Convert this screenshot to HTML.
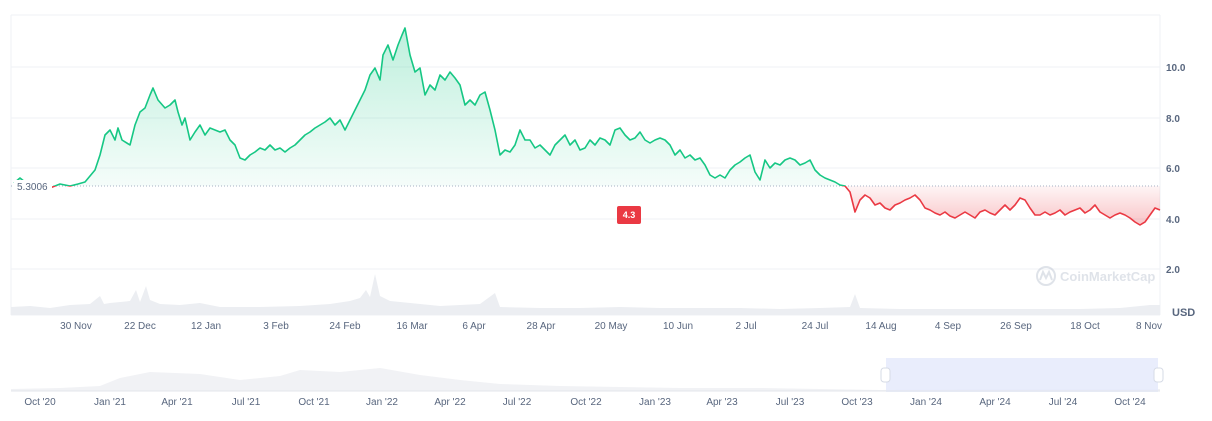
<!DOCTYPE html>
<html><head><meta charset="utf-8"><style>
body{margin:0;background:#fff;width:1212px;height:416px;overflow:hidden;font-family:"Liberation Sans",sans-serif}
svg text{font-family:"Liberation Sans",sans-serif;font-size:10px;fill:#58667e}
</style></head><body>
<svg width="1212" height="416" viewBox="0 0 1212 416">
<defs>
<linearGradient id="gg" x1="0" y1="0" x2="0" y2="1"><stop offset="0" stop-color="#16c784" stop-opacity="0.28"/><stop offset="1" stop-color="#16c784" stop-opacity="0.04"/></linearGradient>
<linearGradient id="rg" x1="0" y1="0" x2="0" y2="1"><stop offset="0" stop-color="#ea3943" stop-opacity="0.05"/><stop offset="1" stop-color="#ea3943" stop-opacity="0.3"/></linearGradient>
<clipPath id="up"><rect x="0" y="0" width="1212" height="186"/></clipPath>
<clipPath id="dn"><rect x="0" y="186" width="1212" height="200"/></clipPath>
</defs>
<g stroke="#eff2f5" stroke-width="1">
<line x1="11" y1="15" x2="1160" y2="15"/><line x1="11" y1="67" x2="1160" y2="67"/><line x1="11" y1="118" x2="1160" y2="118"/><line x1="11" y1="168" x2="1160" y2="168"/><line x1="11" y1="219" x2="1160" y2="219"/><line x1="11" y1="269" x2="1160" y2="269"/>
<line x1="11" y1="15" x2="11" y2="315"/><line x1="1160" y1="15" x2="1160" y2="315"/><line x1="11" y1="315" x2="1160" y2="315"/>
</g>
<g id="fills">
<path clip-path="url(#up)" fill="url(#gg)" d="M14,186 L14,183 20,178 30,186 40,185 50,188 60,184 70,186 78,184 85,182 95,170 100,155 105,135 110,130 115,140 118,128 122,140 130,145 135,125 140,112 145,108 150,95 153,88 158,100 165,108 170,105 175,100 178,112 182,125 185,118 190,140 195,132 200,125 205,135 210,128 215,130 220,132 225,130 230,140 235,145 240,158 245,160 250,155 255,152 260,148 265,150 270,145 275,150 280,148 285,152 290,148 295,145 300,140 305,135 310,132 315,128 320,125 325,122 330,118 335,125 340,120 345,130 350,120 355,110 360,100 365,90 370,75 375,68 380,80 383,55 388,45 393,60 398,45 402,35 405,28 410,55 415,72 420,68 425,95 430,85 435,90 440,75 445,80 450,72 455,78 460,85 465,105 470,100 475,105 480,95 485,92 490,110 495,130 500,155 505,150 510,152 515,145 520,130 525,140 530,140 535,148 540,145 545,150 550,155 555,145 560,140 565,135 570,145 575,140 580,150 585,148 590,140 595,145 600,138 605,140 610,145 615,130 620,128 625,135 630,140 635,138 640,132 645,140 650,143 655,140 660,138 665,140 670,145 675,155 680,150 685,158 690,155 695,160 700,158 705,165 710,175 715,178 720,175 725,178 730,170 735,165 740,162 745,158 750,155 755,172 760,180 765,160 770,168 775,163 780,165 785,160 790,158 795,160 800,165 805,163 810,160 815,170 820,175 825,178 830,180 835,182 840,185 845,186 L845,186 Z"/>
<path clip-path="url(#dn)" fill="url(#rg)" d="M845,186 L850,192 855,212 860,200 865,195 870,198 875,205 880,203 885,208 890,210 895,205 900,203 905,200 910,198 915,195 920,200 925,208 930,210 935,213 940,215 945,212 950,216 955,218 960,215 965,212 970,215 975,218 980,212 985,210 990,213 995,215 1000,210 1005,205 1010,210 1015,205 1020,198 1025,200 1030,208 1035,215 1040,215 1045,212 1050,215 1055,213 1060,210 1065,215 1070,212 1075,210 1080,208 1085,213 1090,210 1095,205 1100,212 1105,215 1110,218 1115,215 1120,213 1125,215 1130,218 1135,222 1140,225 1145,222 1150,215 1155,208 1160,210 L1160,186 Z"/>
</g>
<line x1="11" y1="186" x2="1160" y2="186" stroke="#a6b0c3" stroke-width="1" stroke-dasharray="1,2"/>
<path id="ln" fill="none" stroke-width="1.6" stroke-linejoin="round" d="M14,183 20,178 30,186 40,185 50,188 60,184 70,186 78,184 85,182 95,170 100,155 105,135 110,130 115,140 118,128 122,140 130,145 135,125 140,112 145,108 150,95 153,88 158,100 165,108 170,105 175,100 178,112 182,125 185,118 190,140 195,132 200,125 205,135 210,128 215,130 220,132 225,130 230,140 235,145 240,158 245,160 250,155 255,152 260,148 265,150 270,145 275,150 280,148 285,152 290,148 295,145 300,140 305,135 310,132 315,128 320,125 325,122 330,118 335,125 340,120 345,130 350,120 355,110 360,100 365,90 370,75 375,68 380,80 383,55 388,45 393,60 398,45 402,35 405,28 410,55 415,72 420,68 425,95 430,85 435,90 440,75 445,80 450,72 455,78 460,85 465,105 470,100 475,105 480,95 485,92 490,110 495,130 500,155 505,150 510,152 515,145 520,130 525,140 530,140 535,148 540,145 545,150 550,155 555,145 560,140 565,135 570,145 575,140 580,150 585,148 590,140 595,145 600,138 605,140 610,145 615,130 620,128 625,135 630,140 635,138 640,132 645,140 650,143 655,140 660,138 665,140 670,145 675,155 680,150 685,158 690,155 695,160 700,158 705,165 710,175 715,178 720,175 725,178 730,170 735,165 740,162 745,158 750,155 755,172 760,180 765,160 770,168 775,163 780,165 785,160 790,158 795,160 800,165 805,163 810,160 815,170 820,175 825,178 830,180 835,182 840,185 845,186 850,192 855,212 860,200 865,195 870,198 875,205 880,203 885,208 890,210 895,205 900,203 905,200 910,198 915,195 920,200 925,208 930,210 935,213 940,215 945,212 950,216 955,218 960,215 965,212 970,215 975,218 980,212 985,210 990,213 995,215 1000,210 1005,205 1010,210 1015,205 1020,198 1025,200 1030,208 1035,215 1040,215 1045,212 1050,215 1055,213 1060,210 1065,215 1070,212 1075,210 1080,208 1085,213 1090,210 1095,205 1100,212 1105,215 1110,218 1115,215 1120,213 1125,215 1130,218 1135,222 1140,225 1145,222 1150,215 1155,208 1160,210"/>
<use href="#ln" stroke="#16c784" clip-path="url(#up)"/>
<use href="#ln" stroke="#ea3943" clip-path="url(#dn)"/>
<!-- volume -->
<path fill="#eceef2" d="M11,315 L11,307 30,306 50,308 70,305 90,304 100,296 104,304 110,303 130,301 136,290 140,302 146,286 150,300 160,304 180,305 200,303 220,307 260,307 300,306 330,304 350,301 360,298 366,290 370,297 375,274 380,296 390,301 410,303 440,306 480,304 495,293 500,307 540,308 580,308 620,307 660,308 700,308 740,308 780,309 820,308 850,307 855,294 860,308 900,309 950,309 1000,309 1040,309 1080,309 1120,308 1150,305 1160,305 L1160,315 Z"/>
<g font-weight="bold">
<text x="1166" y="71">10.0</text><text x="1166" y="122">8.0</text><text x="1166" y="172">6.0</text><text x="1166" y="223">4.0</text><text x="1166" y="273">2.0</text>
<text x="1172" y="316" style="font-size:11px">USD</text>
</g>
<rect x="14" y="180" width="38" height="12" fill="#fff"/>
<text x="17" y="190" style="font-size:10px">5.3006</text>
<rect x="617" y="206" width="24" height="18" rx="2" fill="#ea3943"/>
<text x="629" y="218" text-anchor="middle" style="fill:#fff;font-size:9px;font-weight:bold">4.3</text>
<g opacity="0.35">
<circle cx="1046" cy="276" r="9" fill="none" stroke="#a6b0c3" stroke-width="2"/>
<path d="M1040,280 L1043,272 1046,278 1049,272 1052,280" fill="none" stroke="#a6b0c3" stroke-width="2"/>
<text x="1060" y="281" style="font-size:13px;font-weight:bold;fill:#a6b0c3">CoinMarketCap</text>
</g>
<g text-anchor="middle">
<text x="76" y="329">30 Nov</text><text x="140" y="329">22 Dec</text><text x="206" y="329">12 Jan</text><text x="276" y="329">3 Feb</text><text x="345" y="329">24 Feb</text><text x="412" y="329">16 Mar</text><text x="474" y="329">6 Apr</text><text x="541" y="329">28 Apr</text><text x="611" y="329">20 May</text><text x="678" y="329">10 Jun</text><text x="746" y="329">2 Jul</text><text x="815" y="329">24 Jul</text><text x="881" y="329">14 Aug</text><text x="948" y="329">4 Sep</text><text x="1016" y="329">26 Sep</text><text x="1085" y="329">18 Oct</text><text x="1149" y="329">8 Nov</text>
</g>
<!-- navigator -->
<path fill="#f1f2f5" d="M11,391 L11,389 60,388 100,386 120,378 150,372 200,374 240,380 280,376 300,370 340,372 380,368 420,375 460,380 500,384 560,386 620,387 680,388 760,388 820,389 880,390 960,389 1160,389 L1160,391 Z"/>
<rect x="886" y="358" width="272" height="34" fill="#e5eafb" opacity="0.85"/>
<line x1="11" y1="391" x2="1160" y2="391" stroke="#e3e6eb"/>
<rect x="881" y="368" width="9" height="14" rx="3" fill="#fff" stroke="#d6dbe6"/>
<rect x="1154" y="368" width="9" height="14" rx="3" fill="#fff" stroke="#d6dbe6"/>
<g text-anchor="middle">
<text x="40" y="405">Oct '20</text><text x="110" y="405">Jan '21</text><text x="177" y="405">Apr '21</text><text x="246" y="405">Jul '21</text><text x="314" y="405">Oct '21</text><text x="382" y="405">Jan '22</text><text x="450" y="405">Apr '22</text><text x="517" y="405">Jul '22</text><text x="586" y="405">Oct '22</text><text x="655" y="405">Jan '23</text><text x="722" y="405">Apr '23</text><text x="790" y="405">Jul '23</text><text x="857" y="405">Oct '23</text><text x="926" y="405">Jan '24</text><text x="995" y="405">Apr '24</text><text x="1063" y="405">Jul '24</text><text x="1130" y="405">Oct '24</text>
</g>
</svg>
</body></html>
